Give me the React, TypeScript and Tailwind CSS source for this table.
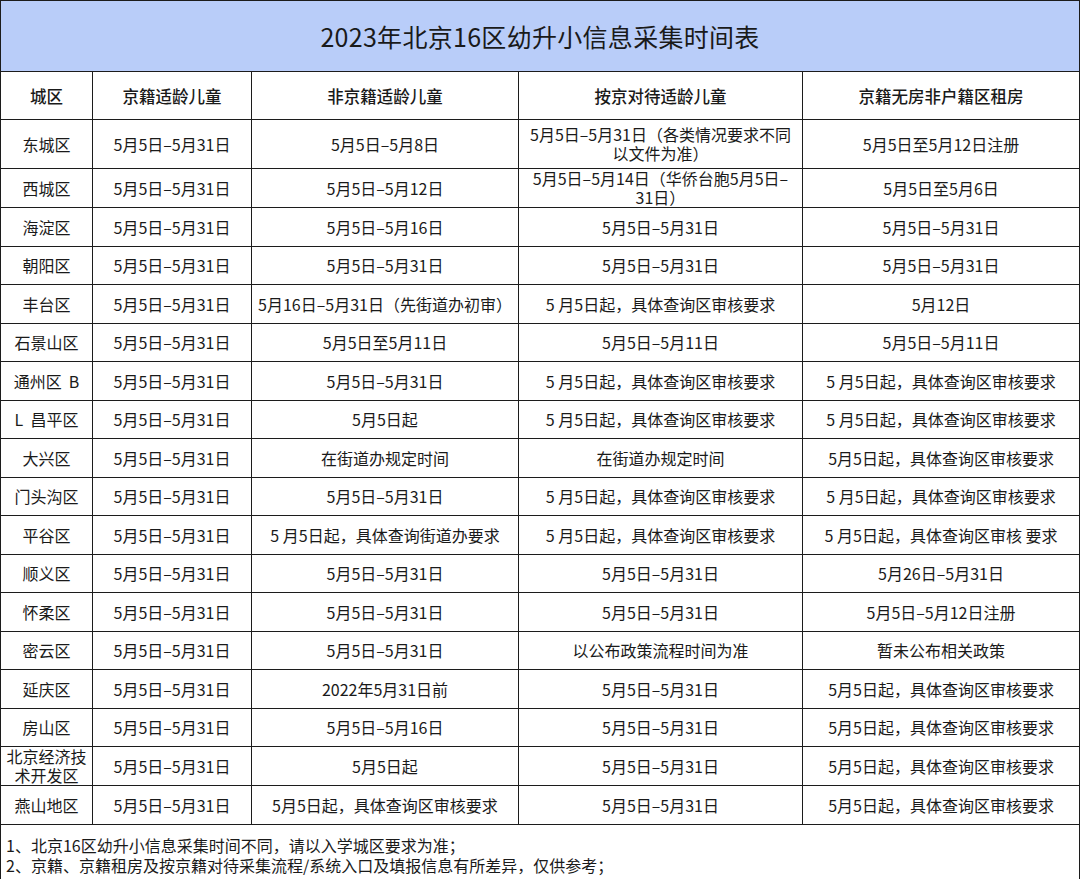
const FONT = '"Noto Sans CJK SC", "Noto Sans", sans-serif';

const HEADERS = ['城区', '京籍适龄儿童', '非京籍适龄儿童', '按京对待适龄儿童', '京籍无房非户籍区租房'];

const D = '5月5日–5月31日';
const Q = '5 月5日起，具体查询区审核要求';
const Q2 = '5月5日起，具体查询区审核要求';

type Row = { cells: React.ReactNode[]; h: string };

const ROWS: Row[] = [
  {
    h: 'h-[49px]',
    cells: [
      '东城区',
      D,
      '5月5日–5月8日',
      <span className="block leading-[19.5px]">5月5日–5月31日（各类情况要求不同<br />以文件为准）</span>,
      '5月5日至5月12日注册',
    ],
  },
  {
    h: 'h-[38.5px]',
    cells: [
      '西城区',
      D,
      '5月5日–5月12日',
      <span className="block leading-[19px]">5月5日–5月14日（华侨台胞5月5日–<br />31日）</span>,
      '5月5日至5月6日',
    ],
  },
  { h: 'h-[38.5px]', cells: ['海淀区', D, '5月5日–5月16日', D, D] },
  { h: 'h-[38.5px]', cells: ['朝阳区', D, D, D, D] },
  { h: 'h-[38.5px]', cells: ['丰台区', D, '5月16日–5月31日（先街道办初审）', Q, '5月12日'] },
  { h: 'h-[38.5px]', cells: ['石景山区', D, '5月5日至5月11日', '5月5日–5月11日', '5月5日–5月11日'] },
  { h: 'h-[38.5px]', cells: ['通州区  B', D, D, Q, Q] },
  { h: 'h-[38.5px]', cells: ['L  昌平区', D, '5月5日起', Q, Q] },
  { h: 'h-[38.5px]', cells: ['大兴区', D, '在街道办规定时间', '在街道办规定时间', Q2] },
  { h: 'h-[38.5px]', cells: ['门头沟区', D, D, Q, Q] },
  { h: 'h-[38.5px]', cells: ['平谷区', D, '5 月5日起，具体查询街道办要求', Q, '5 月5日起，具体查询区审核 要求'] },
  { h: 'h-[38.5px]', cells: ['顺义区', D, D, D, '5月26日–5月31日'] },
  { h: 'h-[38.5px]', cells: ['怀柔区', D, D, D, '5月5日–5月12日注册'] },
  { h: 'h-[38.5px]', cells: ['密云区', D, D, '以公布政策流程时间为准', '暂未公布相关政策'] },
  { h: 'h-[38.5px]', cells: ['延庆区', D, '2022年5月31日前', D, Q2] },
  { h: 'h-[38.5px]', cells: ['房山区', D, '5月5日–5月16日', D, Q2] },
  {
    h: 'h-[38.5px]',
    cells: [<span className="block leading-[19px]">北京经济技<br />术开发区</span>, D, '5月5日起', D, Q2],
  },
  { h: 'h-[38.5px]', cells: ['燕山地区', D, Q2, D, Q2] },
];

const cell = 'border-[1.5px] border-[#1c1c1c] text-center align-middle whitespace-pre p-0';

export default function App() {
  return (
    <div className="w-[1080px] h-[879px] bg-white text-[#1a1a1a]" style={{ fontFamily: FONT }}>
      <table className="w-[1079px] table-fixed border-collapse text-[16px] leading-[18px]">
        <colgroup>
          <col className="w-[92px]" />
          <col className="w-[159px]" />
          <col className="w-[267px]" />
          <col className="w-[284px]" />
          <col className="w-[277px]" />
        </colgroup>
        <tbody>
          <tr className="h-[71px]">
            <td colSpan={5} className={`${cell} bg-[#b9cdf9] text-[25px] tracking-[0.3px]`}>
              2023年北京16区幼升小信息采集时间表
            </td>
          </tr>
          <tr className="h-[48px]">
            {HEADERS.map((t) => (
              <td key={t} className={`${cell} font-medium text-[16.5px]`}>{t}</td>
            ))}
          </tr>
          {ROWS.map((row, i) => (
            <tr key={i} className={row.h}>
              {row.cells.map((c, j) => (
                <td key={j} className={cell}>{c}</td>
              ))}
            </tr>
          ))}
          <tr className="h-[56px]">
            <td colSpan={5} className={`${cell} text-left px-[5px] leading-[20px] pt-[5px]`}>
              <div>1、北京16区幼升小信息采集时间不同，请以入学城区要求为准；</div>
              <div>2、京籍、京籍租房及按京籍对待采集流程/系统入口及填报信息有所差异，仅供参考；</div>
            </td>
          </tr>
        </tbody>
      </table>
    </div>
  );
}
